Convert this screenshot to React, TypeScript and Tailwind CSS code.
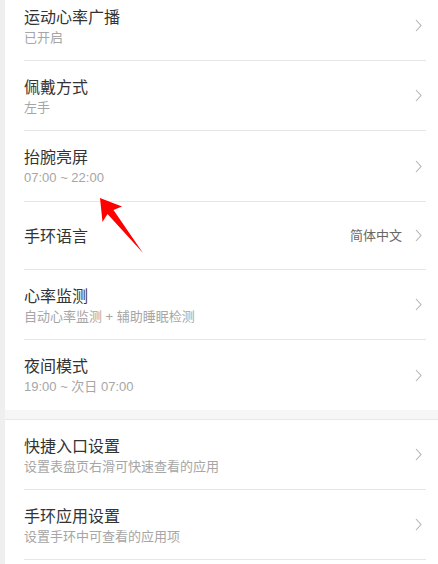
import React from 'react';

type Item = { title: string; sub?: string; value?: string; h?: string };

const groupA: Item[] = [
  { title: '运动心率广播', sub: '已开启' },
  { title: '佩戴方式', sub: '左手' },
  { title: '抬腕亮屏', sub: '07:00 ~ 22:00', h: 'h-[71px]' },
  { title: '手环语言', value: '简体中文', h: 'h-[68px]' },
  { title: '心率监测', sub: '自动心率监测 + 辅助睡眠检测' },
  { title: '夜间模式', sub: '19:00 ~ 次日 07:00' },
];

const groupB: Item[] = [
  { title: '快捷入口设置', sub: '设置表盘页右滑可快速查看的应用' },
  { title: '手环应用设置', sub: '设置手环中可查看的应用项' },
];

const Chevron = () => (
  <svg width="7" height="13" viewBox="0 0 7 13" className="shrink-0">
    <path d="M1 1 L6 6.5 L1 12" fill="none" stroke="#b4b4b4" strokeWidth="1.1" />
  </svg>
);

const Row = ({ item, last }: { item: Item; last?: boolean }) => (
  <div
    className={`ml-[19px] mr-[12px] pr-[4px] flex items-center justify-between ${item.h ?? 'h-[70px]'} ${
      last ? '' : 'border-b border-[#e6e6e6]'
    }`}
  >
    <div className="flex flex-col pt-[2px]">
      <span className="text-[16px] leading-[22px] text-[#333]">{item.title}</span>
      {item.sub && <span className="text-[13px] leading-[18px] text-[#a6a6a6]">{item.sub}</span>}
    </div>
    <div className="flex items-center gap-[13px]">
      {item.value && <span className="text-[13px] text-[#666]">{item.value}</span>}
      <Chevron />
    </div>
  </div>
);

export default function App() {
  return (
    <div
      className="relative w-[438px] h-[564px] overflow-hidden bg-white flex"
      style={{ fontFamily: '"Liberation Sans", "Noto Sans CJK SC", sans-serif' }}
    >
      <div className="w-[5px] shrink-0 bg-[#efefef]" />
      <div className="flex-1 -mt-[9px]">
        {groupA.map((it, i) => (
          <Row key={it.title} item={it} last={i === groupA.length - 1} />
        ))}
        <div className="h-[10px] bg-[#f6f6f6] border-b border-[#e8e8e8]" />
        {groupB.map(it => (
          <Row key={it.title} item={it} />
        ))}
      </div>

      {/* annotation arrow */}
      <svg className="absolute left-0 top-0 pointer-events-none" width="438" height="564">
        <polygon points="100,198 122,206.5 113.5,210 143,253 107.5,214 102.5,222" fill="#ff0000" />
      </svg>
    </div>
  );
}
